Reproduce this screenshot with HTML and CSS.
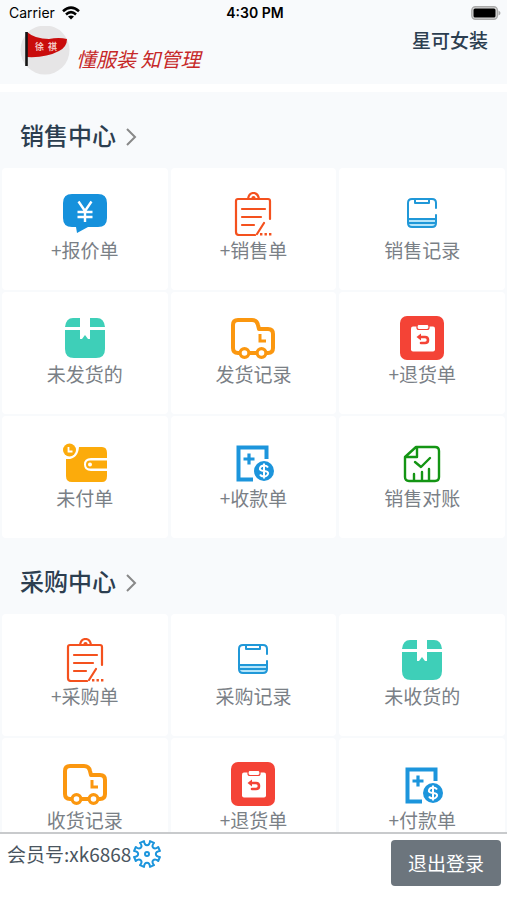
FILE: index.html
```html
<!DOCTYPE html>
<html lang="zh-CN">
<head>
<meta charset="utf-8">
<meta name="viewport" content="width=device-width, initial-scale=1">
<title>星可女装</title>
<link rel="stylesheet" href="styles.css">
</head>
<body>
<svg class="sprite" aria-hidden="true">
  <symbol id="quote" viewBox="0 0 44 44">
    <path fill="#1691dc" d="M9 2h26q9 0 9 9v15q0 9-9 9H25L14 41l-1-6H9q-9 0-9-9V11q0-9 9-9z"/>
    <path fill="none" stroke="#fff" stroke-width="2.400" d="M15.500 9.500 22 19l6.500-9.500M22 18v12M14.500 20h15M14.500 25h15"/>
  </symbol>
  <symbol id="order" viewBox="0 0 44 44">
    <g fill="none" stroke="#f4511e" stroke-width="2.200" stroke-linecap="round" stroke-linejoin="round">
      <path d="M24 43H8q-3 0-3-3V9q0-2 2-2h10q1-6 5.500-6T28 7h9q2 0 2 2v18M17 7h11M21.500 6.500v-.5a1 1 0 0 1 2 0v.5"/>
      <path d="M11 17h23M11 25h19M11 33h12M33 31l-7 11"/>
    </g>
    <path fill="#f4511e" d="M29 41h2.400v2.400H29zM33.500 41h2.400v2.400h-2.400zM38 41h2.400v2.400H38z"/>
  </symbol>
  <symbol id="record" viewBox="0 0 44 44">
    <path fill="#b5e5fa" d="M9 26h26v8H9z"/>
    <path fill="none" stroke="#2098d8" stroke-width="2" stroke-linecap="round" stroke-linejoin="round" d="M36 16v-5q0-4-4-4H12q-4 0-4 4v20q0 4 4 4h20q4 0 4-4V23M15 7v4h14V7M8 27h28M9 31h26"/>
  </symbol>
  <symbol id="box" viewBox="0 0 44 44">
    <path fill="#3ecfb8" d="M2 11q1-9 8-9h7v9zM27 2h7q7 0 8 9H27zM2 14h15v9h2l3-4 3 4h2v-9h15v19q0 9-9 9H11q-9 0-9-9z"/>
  </symbol>
  <symbol id="truck" viewBox="0 0 44 44">
    <g fill="none" stroke="#fb970f" stroke-width="4" stroke-linejoin="round">
      <path d="M9 37H7q-5 0-5-5V9q0-5 5-5h14q5 0 6 5l1 4h9q5 0 5 5v14q0 5-5 5h-1M18 37h8"/>
      <circle cx="13.500" cy="37" r="4.400" stroke-width="3.200"/><circle cx="30.500" cy="37" r="4.400" stroke-width="3.200"/>
      <path stroke-width="3" stroke-linejoin="miter" d="M29 18v7h6"/>
    </g>
  </symbol>
  <symbol id="return" viewBox="0 0 44 44">
    <rect width="44" height="44" rx="7" fill="#f44336"/>
    <rect x="11" y="10.500" width="24" height="25" rx="2" fill="#fff"/>
    <rect x="17" y="8.500" width="12" height="5" rx="2" fill="#fff" stroke="#f44336" stroke-width="1.200"/>
    <path fill="none" stroke="#f44336" stroke-width="2.600" stroke-linecap="round" d="M20 21h5q3 0 3 3t-3 3h-4"/>
    <path fill="#f44336" d="M16.500 21l4.500-3.500v7z"/>
  </symbol>
  <symbol id="wallet" viewBox="0 0 44 44">
    <path fill="#fcab0b" d="M16 7h23q5 0 5 6v5H28q-7 0-7 6.500t7 6.500h16v5q0 6-5 6H9q-6 0-6-6V19q12 1 13-12z"/>
    <path fill="#fcab0b" d="M44 20.500H27q-4 0-4 4t4 4h17z"/>
    <circle cx="27" cy="24.500" r="2" fill="#fff"/>
    <circle cx="6.500" cy="10" r="6.500" fill="#fcab0b"/>
    <path fill="none" stroke="#fff" stroke-width="1.800" d="M5.500 7v4.500h4"/>
  </symbol>
  <symbol id="receipt" viewBox="0 0 44 44">
    <path fill="none" stroke="#1c95dc" stroke-width="4" d="M22 39.500H7.500v-32h28V19"/>
    <path fill="none" stroke="#1c95dc" stroke-width="3.200" d="M18 13.500v11M12.500 19h11"/>
    <circle cx="33" cy="31" r="10" fill="#1c95dc"/>
    <path fill="none" stroke="#fff" stroke-width="2" d="M37 27.500q-1-2-4-2t-4 2.500 4 3 4 3-4 2.500-4-2M33 23.500v15"/>
  </symbol>
  <symbol id="account" viewBox="0 0 44 44">
    <g fill="none" stroke="#149514" stroke-width="2.400" stroke-linecap="round" stroke-linejoin="round">
      <path d="M5 17 16 7h19q4 0 4 4v26q0 4-4 4H9q-4 0-4-4zM6 17h11V7"/>
      <path d="m15 22 6 5 9-9M14 34v6M22 32v8M29 29v11"/>
    </g>
  </symbol>
</svg>

<header class="header">
  <div class="status">
    <div class="carrier">Carrier
      <svg class="wifi" viewBox="0 0 18 14" aria-hidden="true"><path fill="none" stroke="#000" stroke-width="2.600" d="M1 5.200q8-7 16 0M4 8.400q5-4.400 10 0"/><path d="M6 10.600q3-2.400 6 0L9 13.600z"/></svg>
    </div>
    <div class="time">4:30 PM</div>
    <svg class="battery" viewBox="0 0 30 14" aria-hidden="true"><rect x=".8" y=".8" width="25.600" height="12.400" rx="3.600" fill="#ddd" stroke="#aaa" stroke-width="1.400"/><rect x="2.500" y="2.500" width="22" height="9" rx="1.500"/><path fill="#aaa" d="M27.500 4.500q2 1 2 2.500t-2 2.500z"/></svg>
  </div>
  <div class="brand">
    <svg class="logo" viewBox="0 0 50 50" aria-hidden="true">
      <circle cx="25" cy="24" r="24.500" fill="#e6e5e6"/>
      <path fill="#c90c0c" d="M7 6q8 7 22 7 10-2 18 0 0 8-8 12-13 7-32 6z"/>
      <path stroke="#151515" stroke-width="2.600" d="M6.500 6v34"/>
      <text class="logo-text" x="15" y="24">徐</text>
      <text class="logo-text" x="28" y="24">祺</text>
    </svg>
    <p class="slogan">懂服装 知管理</p>
    <p class="shop">星可女装</p>
  </div>
</header>

<main class="content">
  <section>
    <h2 class="title"><a href="#sales">销售中心<svg class="chevron" viewBox="0 0 12 20" aria-hidden="true"><path d="m2 2 8 8-8 8"/></svg></a></h2>
    <nav class="grid" id="sales">
      <a class="card" href="#"><svg class="icon"><use href="#quote"/></svg>+报价单</a>
      <a class="card" href="#"><svg class="icon"><use href="#order"/></svg>+销售单</a>
      <a class="card" href="#"><svg class="icon"><use href="#record"/></svg>销售记录</a>
      <a class="card" href="#"><svg class="icon"><use href="#box"/></svg>未发货的</a>
      <a class="card" href="#"><svg class="icon"><use href="#truck"/></svg>发货记录</a>
      <a class="card" href="#"><svg class="icon"><use href="#return"/></svg>+退货单</a>
      <a class="card" href="#"><svg class="icon"><use href="#wallet"/></svg>未付单</a>
      <a class="card" href="#"><svg class="icon"><use href="#receipt"/></svg>+收款单</a>
      <a class="card" href="#"><svg class="icon"><use href="#account"/></svg>销售对账</a>
    </nav>
  </section>
  <section>
    <h2 class="title"><a href="#purchase">采购中心<svg class="chevron" viewBox="0 0 12 20" aria-hidden="true"><path d="m2 2 8 8-8 8"/></svg></a></h2>
    <nav class="grid" id="purchase">
      <a class="card" href="#"><svg class="icon"><use href="#order"/></svg>+采购单</a>
      <a class="card" href="#"><svg class="icon"><use href="#record"/></svg>采购记录</a>
      <a class="card" href="#"><svg class="icon"><use href="#box"/></svg>未收货的</a>
      <a class="card" href="#"><svg class="icon"><use href="#truck"/></svg>收货记录</a>
      <a class="card" href="#"><svg class="icon"><use href="#return"/></svg>+退货单</a>
      <a class="card" href="#"><svg class="icon"><use href="#receipt"/></svg>+付款单</a>
    </nav>
  </section>
</main>

<footer class="footer">
  <p class="member">会员号:xk6868</p>
  <button class="settings" type="button" aria-label="设置">
    <svg viewBox="0 0 28 28" aria-hidden="true"><path d="M11 1.100C11.500 6.500 16.500 6.500 17 1.100L21 2.800C17.500 6.900 21.100 10.500 25.200 7L26.900 11C21.500 11.500 21.500 16.500 26.900 17L25.200 21C21.100 17.500 17.500 21.100 21 25.200L17 26.900C16.500 21.500 11.500 21.500 11 26.900L7 25.200C10.500 21.100 6.900 17.500 2.800 21L1.100 17C6.500 16.500 6.500 11.500 1.100 11L2.800 7C6.900 10.500 10.500 6.900 7 2.800z"/><circle cx="14" cy="14" r="2"/></svg>
  </button>
  <button class="logout" type="button">退出登录</button>
</footer>
</body>
</html>
```
FILE: styles.css
```css
* { box-sizing: border-box; margin: 0; }
body {
  display: flex;
  flex-direction: column;
  height: 100vh;
  background: #fff;
  color: #2c3e50;
  font: 19px/24px "Noto Sans CJK SC", sans-serif;
}
a { color: inherit; text-decoration: none; }
button { padding: 0; border: 0; font: inherit; }
svg { display: block; }
.sprite { position: absolute; width: 0; height: 0; }

.header { padding-bottom: 8px; background: #f8fafc; }
.status {
  display: grid;
  grid-template-columns: 1fr auto 1fr;
  align-items: center;
  height: 26px;
  padding: 0 6px 0 9px;
  color: #000;
  font: 14px/20px Inter, sans-serif;
}
.carrier { display: flex; align-items: center; gap: 7px; }
.wifi { width: 18px; height: 14px; }
.time { font-weight: 600; }
.battery { width: 30px; height: 14px; justify-self: end; }
.brand { display: flex; padding: 0 19px 0 20px; }
.logo { width: 50px; height: 50px; }
.logo-text { fill: #f3c7c3; font-size: 9px; font-weight: 700; }
.slogan { padding-top: 21px; margin-left: 6px; color: #c62828; font-size: 20px; font-style: italic; }
.shop { padding-top: 2px; margin-left: auto; font-weight: 500; }

.content {
  flex: 1;
  min-height: 0;
  overflow-y: auto;
  scrollbar-width: none;
  background: #f8fafc;
  border-top: 8px solid #fff;
}
.title { padding: 27px 20px 17px; font-size: 24px; line-height: 32px; font-weight: 500; }
.title a { display: inline-flex; align-items: center; gap: 9px; }
.chevron { width: 12px; height: 20px; margin-top: 4px; fill: none; stroke: #888; stroke-width: 2; }
.grid { display: grid; grid-template-columns: repeat(3, 1fr); gap: 2px 3px; padding: 0 2px; }
.card {
  display: flex;
  flex-direction: column;
  align-items: center;
  height: 122px;
  padding-top: 24px;
  border-radius: 4px;
  background: #fff;
  color: #7a8086;
}
.icon { width: 44px; height: 44px; margin-bottom: 2px; }

.footer {
  display: flex;
  align-items: flex-start;
  height: 68px;
  padding: 6px 6px 0 7px;
  border-top: 2px solid #c8cacc;
  background: #fff;
}
.member { padding-top: 2px; color: #4a5560; }
.settings { width: 28px; height: 28px; margin-left: 2px; background: none; }
.settings svg { width: 28px; height: 28px; fill: none; stroke: #1c95dc; stroke-width: 2; stroke-linejoin: round; }
.logout {
  width: 110px;
  height: 46px;
  margin-left: auto;
  border-radius: 4px;
  background: #6c757d;
  color: #fff;
}
```
